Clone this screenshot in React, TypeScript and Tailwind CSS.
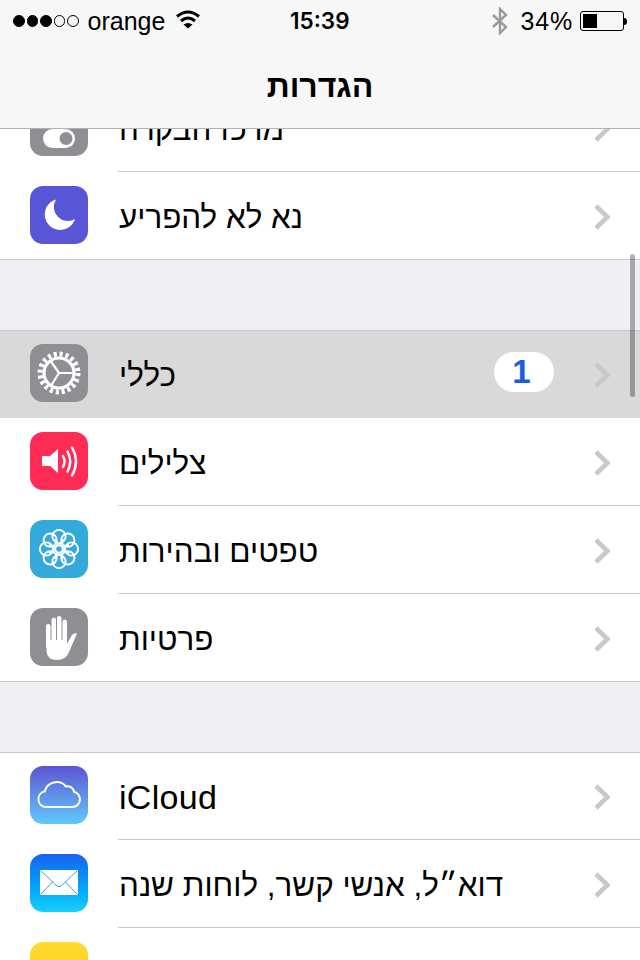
import type { ReactNode } from 'react';

const FONT = "font-['Liberation_Sans',sans-serif]";

function Chevron() {
  return (
    <svg width="16" height="26" viewBox="0 0 16 26" className="mt-[3px] shrink-0">
      <path d="M2 2 L13.5 13 L2 24" fill="none" stroke="#c7c7cc" strokeWidth="4.5" />
    </svg>
  );
}

function Glyph({ children }: { children: ReactNode }) {
  return (
    <svg width="58" height="58" viewBox="0 0 58 58">
      {children}
    </svg>
  );
}

function ToggleGlyph() {
  return (
    <Glyph>
      <rect x="13" y="31" width="32" height="19" rx="9.5" fill="#fff" />
      <circle cx="36" cy="40.5" r="6.5" fill="#8e8e93" />
    </Glyph>
  );
}

function MoonGlyph() {
  return (
    <Glyph>
      <path d="M26 13.5 A15.5 15.5 0 1 0 45 33 A14 14 0 0 1 26 13.5 Z" fill="#fff" />
    </Glyph>
  );
}

function GearGlyph() {
  return (
    <Glyph>
      <circle cx="29" cy="29" r="19" fill="none" stroke="#fff" strokeWidth="5" strokeDasharray="3.1 2.87" />
      <circle cx="29" cy="29" r="15" fill="none" stroke="#fff" strokeWidth="3.2" />
      <path d="M29 29 L44 29 M29 29 L20 16 M29 29 L20.5 42.5" stroke="#fff" strokeWidth="2.2" fill="none" />
    </Glyph>
  );
}

function SoundGlyph() {
  return (
    <Glyph>
      <path d="M12 24 H20 L28 17 V41 L20 34 H12 Z" fill="#fff" />
      <g fill="none" stroke="#fff" strokeLinecap="round" strokeWidth="2.4">
        <path d="M33 24 Q36 29.5 33 35" />
        <path d="M37.5 19.5 Q43 29.5 37.5 39.5" />
        <path d="M42 15.5 Q50 29.5 42 43.5" />
      </g>
    </Glyph>
  );
}

function FlowerGlyph() {
  const angles = [0, 45, 90, 135, 180, 225, 270, 315];
  return (
    <Glyph>
      <g fill="none" stroke="#fff" strokeWidth="1.9">
        {angles.map((a) => (
          <circle key={a} cx="29" cy="16.5" r="6.6" transform={`rotate(${a} 29 29)`} />
        ))}
        {angles.map((a) => (
          <path key={a} d="M29 25 L29 18" strokeWidth="1.6" transform={`rotate(${a + 22.5} 29 29)`} />
        ))}
        <circle cx="29" cy="29" r="3.8" strokeWidth="2" />
      </g>
    </Glyph>
  );
}

function HandGlyph() {
  return (
    <Glyph>
      <g fill="#fff">
        <rect x="16" y="16" width="4.5" height="24" rx="2.2" />
        <rect x="21.5" y="9.5" width="4.5" height="30" rx="2.2" />
        <rect x="27" y="8" width="4.5" height="30" rx="2.2" />
        <rect x="32.5" y="11.5" width="4.5" height="28" rx="2.2" />
        <path d="M16 32 H37 V36 L42 27 Q44 24.5 47 25.5 L39 44 Q36 52 27 52 Q17 52 16.5 43 Z" />
      </g>
    </Glyph>
  );
}

function CloudGlyph() {
  return (
    <Glyph>
      <path
        d="M15 41 H42.5 A7.7 7.7 0 0 0 44 25.8 A6.3 6.3 0 0 0 36 20.5 A12.2 12.2 0 0 0 14.8 25.3 A8 8 0 0 0 15 41 Z"
        fill="none"
        stroke="#fff"
        strokeWidth="2"
      />
    </Glyph>
  );
}

function MailGlyph() {
  return (
    <Glyph>
      <rect x="10" y="16" width="38" height="25" fill="#fff" />
      <path d="M10.5 16.5 L27 32 Q29 33.5 31 32 L47.5 16.5 M10.5 40.5 L22.5 28 M47.5 40.5 L35.5 28" fill="none" stroke="#2a8cf2" strokeWidth="0.9" />
    </Glyph>
  );
}

function Icon({ className, children }: { className: string; children?: ReactNode }) {
  return <div className={`h-[58px] w-[58px] shrink-0 overflow-hidden rounded-[13px] ${className}`}>{children}</div>;
}

type RowProps = {
  icon: ReactNode;
  label: string;
  top?: boolean;
  last?: boolean;
  active?: boolean;
  latin?: boolean;
  badge?: string;
};

function Row({ icon, label, top, last, active, latin, badge }: RowProps) {
  return (
    <div
      className={`flex h-[88px] pl-[30px] ${top ? 'border-t border-[#c8c7cc] pt-[13px]' : 'pt-[14px]'} ${last ? 'border-b border-[#c8c7cc]' : ''} ${active ? 'bg-[#d9d9d9]' : 'bg-white'}`}
    >
      <div>{icon}</div>
      <div
        className={`ml-[30px] flex flex-1 items-start pr-[30px] ${top ? '-mt-[13px] pt-[13px]' : '-mt-[14px] pt-[14px]'} ${last || active ? '' : 'border-b border-[#c8c7cc]'}`}
      >
        <div className="flex h-[58px] flex-1 items-center">
          <span
            dir="auto"
            className={`pl-px leading-none text-black ${latin ? 'pt-[3px] text-[34px] tracking-[0.3px]' : 'pt-[6px] text-[31.4px]'}`}
          >
            {label}
          </span>
          <div className="flex-1" />
          {badge && (
            <span className="-mt-[2px] mr-[40px] flex h-[40px] w-[60px] items-center justify-center rounded-full bg-white pr-[5px] text-[33px] font-bold text-[#1c5de0]">
              {badge}
            </span>
          )}
          <Chevron />
        </div>
      </div>
    </div>
  );
}

function Gap() {
  return <div className="h-[70px] bg-[#efeff4]" />;
}

function StatusBar() {
  return (
    <div className="flex h-[42px] items-center pl-[13px] pr-[13px] text-black">
      <div className="flex w-[273px] items-center">
        <div className="flex gap-[2px]">
          {[true, true, true, false, false].map((on, i) => (
            <span
              key={i}
              className={`h-[11.5px] w-[11.5px] rounded-full border border-black ${on ? 'bg-black' : ''}`}
            />
          ))}
        </div>
        <span className="ml-[9px] text-[25px] leading-none">orange</span>
        <svg width="25" height="20" viewBox="0 0 25 20" className="ml-[11px] -mt-[3px]">
          <g fill="none" stroke="#000" strokeWidth="3">
            <path d="M1 6.5 Q12 -2.5 23 6.5" />
            <path d="M5 11 Q12 5 19 11" />
          </g>
          <path d="M12 18.5 L7.5 14.5 Q12 11.5 16.5 14.5 Z" fill="#000" />
        </svg>
      </div>
      <span className="ml-[4px] font-['Inter',sans-serif] text-[22.5px] font-semibold leading-none">15:39</span>
      <div className="ml-auto flex items-center">
        <svg width="18" height="28" viewBox="0 0 18 28">
          <path d="M2 8 L15 20 L9 26 V2 L15 8 L2 20" fill="none" stroke="#9a9a9a" strokeWidth="2.4" />
        </svg>
        <span className="ml-[12px] text-[25px] leading-none tracking-[0.8px]">34%</span>
        <div className="ml-[7px] flex items-center">
          <div className="h-[20px] w-[44px] rounded-[3px] border border-black p-[2px]">
            <div className="h-full w-[14px] bg-black" />
          </div>
          <div className="h-[7px] w-[3px] rounded-r-full bg-black" />
        </div>
      </div>
    </div>
  );
}

export default function App() {
  return (
    <div className={`relative flex h-[960px] w-[640px] flex-col overflow-hidden bg-[#efeff4] ${FONT}`}>
      <header className="h-[129px] shrink-0 border-b border-[#b2b2b2] bg-[#f7f7f7]">
        <StatusBar />
        <h1 dir="rtl" className="mt-[26px] text-center text-[32px] font-bold leading-[36px] text-black">
          הגדרות
        </h1>
      </header>

      <div className="min-h-0 flex-1 overflow-hidden">
        <div className="-mt-[45px]">
          <Row icon={<Icon className="bg-[#8e8e93]"><ToggleGlyph /></Icon>} label="מרכז הבקרה" />
          <Row icon={<Icon className="bg-[#5856d6]"><MoonGlyph /></Icon>} label="נא לא להפריע" last />
          <Gap />
          <Row icon={<Icon className="bg-[#8e8e93]"><GearGlyph /></Icon>} label="כללי" top active badge="1" />
          <Row icon={<Icon className="bg-[#ff2d55]"><SoundGlyph /></Icon>} label="צלילים" />
          <Row icon={<Icon className="bg-[#34aadc]"><FlowerGlyph /></Icon>} label="טפטים ובהירות" />
          <Row icon={<Icon className="bg-[#8e8e93]"><HandGlyph /></Icon>} label="פרטיות" last />
          <Gap />
          <Row
            icon={<Icon className="bg-linear-to-b from-[#5a54d0] to-[#60c8fb]"><CloudGlyph /></Icon>}
            label="iCloud"
            latin
            top
          />
          <Row
            icon={<Icon className="bg-linear-to-b from-[#1a62f0] to-[#19d0fb]"><MailGlyph /></Icon>}
            label="דוא״ל, אנשי קשר, לוחות שנה"
          />
          <Row icon={<Icon className="bg-linear-to-b from-[#ffdb30] to-[#ffc800]" />} label="" />
        </div>
      </div>

      <div className="absolute left-[630px] top-[254px] h-[143px] w-[5px] rounded-full bg-black/30" />
    </div>
  );
}
